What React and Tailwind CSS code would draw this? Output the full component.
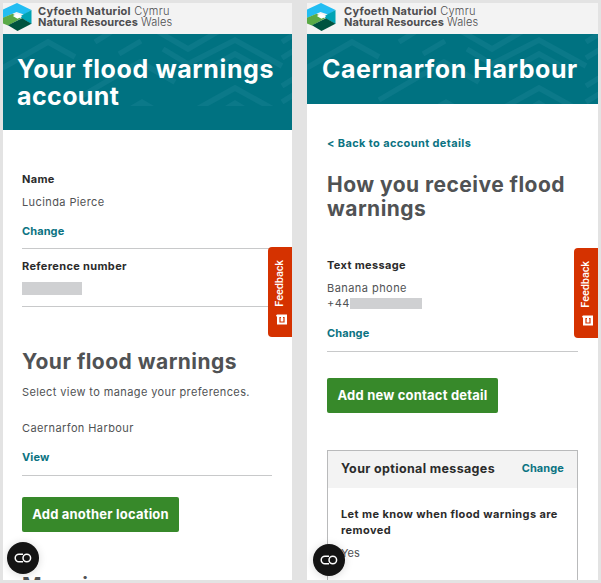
import React from "react";

function Logo() {
  return (
    <svg width="29" height="28" viewBox="0 0 29 28" className="shrink-0">
      <path d="M14 0 28.500 7 21 11.500 13.500 9 0 15V6.500z" fill="#22bdf2" />
      <path d="M28.500 7V21L19 15.500 17 13.500 21 11z" fill="#00a3b4" />
      <path d="M0 14.800 9.500 10.800 18 15.500 5 22.500 0 20.500z" fill="#5aaa46" />
      <path d="M5 22.300 19 15.300 28.500 20.800 14.500 28z" fill="#00533f" />
      <path d="m14 10.800 5.200 2.500L14.500 15.800 9.800 13z" fill="#fff" />
    </svg>
  );
}

function Header({ gap }) {
  return (
    <div className={"flex h-[31px] items-start overflow-hidden bg-[#f3f3f3] text-[#4d4d4f] " + gap}>
      <Logo />
      <div className="whitespace-nowrap pt-[3px] text-[11px] leading-[11px]">
        <div className="tracking-[0.25px]"><b className="font-bold">Cyfoeth Naturiol</b> <span className="font-light">Cymru</span></div>
        <div className="tracking-[0.07px]"><b className="font-bold">Natural Resources</b> <span className="font-light">Wales</span></div>
      </div>
    </div>
  );
}

function Chevrons() {
  return (
    <svg className="absolute left-0 top-0 h-[72px] w-full overflow-hidden" fill="none" stroke="#0b7989" strokeWidth="5.500">
      <path d="M-4 36 45 8 72 23M92 8 108-2M72 66 137 28 172 48M138 7 116 20M154-3 185 15 216-3M160 15 185 30 232 6 279 32M203 36 232 20 261 36M194 75 232 54 270 75M279 8 292 0M279 24 292 16M279 52 292 44M279 68 292 60" />
      <path d="M127 72 139 65 151 72zM222 72 232 66 242 72z" fill="#0b7989" stroke="none" />
    </svg>
  );
}

function Feedback({ top }) {
  return (
    <div className={"absolute right-0 flex h-[90px] w-6 flex-col items-center rounded-l-[4px] bg-[#d53200] pt-[13px] text-white " + top}>
      <span className="rotate-180 font-['Roboto',sans-serif] text-[11px] font-medium leading-[14px] tracking-[-0.1px] [writing-mode:vertical-rl]">Feedback</span>
      <svg width="11" height="11" viewBox="0 0 11 11" className="ml-[2px] mt-[7px]">
        <path d="M0 1.500 1 .5h10v10H1V3z" fill="#fff" />
        <path d="M5 3.500H4v4.500h4V3.500H7" fill="none" stroke="#d53200" strokeWidth="1.200" />
      </svg>
    </div>
  );
}

function Consent({ place }) {
  return (
    <div className={"absolute flex h-8 w-8 items-center justify-center rounded-full bg-[#141414] shadow-[0_1px_8px_rgba(0,0,0,0.15)] " + place}>
      <svg width="18" height="10" viewBox="0 0 18 10" fill="none" stroke="#fff" strokeWidth="1.500">
        <path d="M9 1.200H5a3.800 3.800 0 0 0 0 7.600H9" />
        <circle cx="12.800" cy="5" r="3.800" />
      </svg>
    </div>
  );
}

function Panel({ children }) {
  return <section className="relative h-[577px] shrink-0 overflow-hidden bg-white">{children}</section>;
}

const label = "font-bold tracking-[0.35px] text-[#2b2b2b]";
const link = "font-bold tracking-[0.1px] text-[#0b7382]";
const heading = "text-[21px] font-bold leading-6 tracking-[0.47px]";
const rule = "w-full border-[#c8c9ca]";
const button = "h-[35px] rounded-[2px] bg-[#37892a] pb-[2px] text-[13px] font-bold text-white";

export default function App() {
  return (
    <div className="flex h-[583px] w-[601px] gap-[15px] overflow-hidden whitespace-nowrap bg-[#e3e3e3] pl-[3px] pt-[3px] font-['Inter','Liberation_Sans',sans-serif] text-[11px] leading-4 text-[#505254]">
      <div className="w-[289px]">
        <Panel>
          <Header gap="gap-[6px]" />
          <div className="relative h-[96px] overflow-hidden bg-[#007281] pl-[14px] pt-[22px] text-[25px] font-bold leading-[27px] text-white">
            <Chevrons />
            <h1 className="relative"><span className="tracking-[0.62px]">Your flood warnings</span><br /><span className="tracking-[0.4px]">account</span></h1>
          </div>
          <main className="flex flex-col items-start pl-[19px] pr-[20px] pt-[41px]">
            <div className={label}>Name</div>
            <div className="mt-[7px] tracking-[0.4px]">Lucinda Pierce</div>
            <a className={link + " mt-[13px]"}>Change</a>
            <hr className={rule + " mt-[9px]"} />
            <div className={label + " mt-[9px]"}>Reference number</div>
            <div className="mt-2 h-[13px] w-[60px] bg-[#cfd0d2]" />
            <hr className={rule + " mt-[11px]"} />
            <h2 className={heading + " mt-[43px]"}>Your flood warnings</h2>
            <p className="mt-[10px] tracking-[0.39px]">Select view to manage your preferences.</p>
            <div className="mt-5 tracking-[0.4px]">Caernarfon Harbour</div>
            <a className={link + " mt-[13px]"}>View</a>
            <hr className={rule + " mt-[10px]"} />
            <button className={button + " mt-[21px] w-[157px] tracking-[0.2px]"}>Add another location</button>
            <h2 className={heading + " mt-[42px]"}>More in</h2>
          </main>
          <Feedback top="top-[244px]" />
          <Consent place="left-[4px] top-[539px]" />
        </Panel>
      </div>
      <div className="w-[291px]">
        <Panel>
          <Header gap="gap-[8px]" />
          <div className="relative h-[70px] overflow-hidden bg-[#007281] pl-[15px] pt-[22px] text-[25px] font-bold leading-[27px] text-white">
            <Chevrons />
            <h1 className="relative tracking-[0.55px]">Caernarfon Harbour</h1>
          </div>
          <main className="flex flex-col items-start pl-[20px] pr-[20px] pt-[31px]">
            <a className="font-bold tracking-[0.37px] text-[#0b7382]">&lt; Back to account details</a>
            <h2 className={heading + " mt-[22px]"}>How you receive flood<br />warnings</h2>
            <div className={label + " mt-[36px]"}>Text message</div>
            <div className="mt-[7px] tracking-[0.45px]">Banana phone</div>
            <div className="-mt-px flex items-center tracking-[0.4px]">+44<span className="h-[11px] w-[72px] bg-[#cfd0d2]" /></div>
            <a className={link + " mt-[14px]"}>Change</a>
            <hr className={rule + " mt-[10px]"} />
            <button className={button + " mt-[26px] w-[171px] tracking-[0.2px]"}>Add new contact detail</button>
            <div className="mt-[37px] h-[160px] w-full border border-[#b9babb]">
              <div className="flex h-[37px] justify-between bg-[#f3f3f3] px-[13px] pt-[10px]">
                <span className="text-[12.500px] font-bold tracking-[0.35px] text-[#2b2b2b]">Your optional messages</span>
                <a className={link + " -mt-px"}>Change</a>
              </div>
              <div className="px-[13px] pt-[18px]">
                <div className="font-bold tracking-[0.4px] text-[#2b2b2b]">Let me know when flood warnings are<br />removed</div>
                <div className="mt-[7px]">Yes</div>
              </div>
            </div>
          </main>
          <Feedback top="top-[245px]" />
          <Consent place="left-[6px] top-[541px]" />
        </Panel>
      </div>
    </div>
  );
}
